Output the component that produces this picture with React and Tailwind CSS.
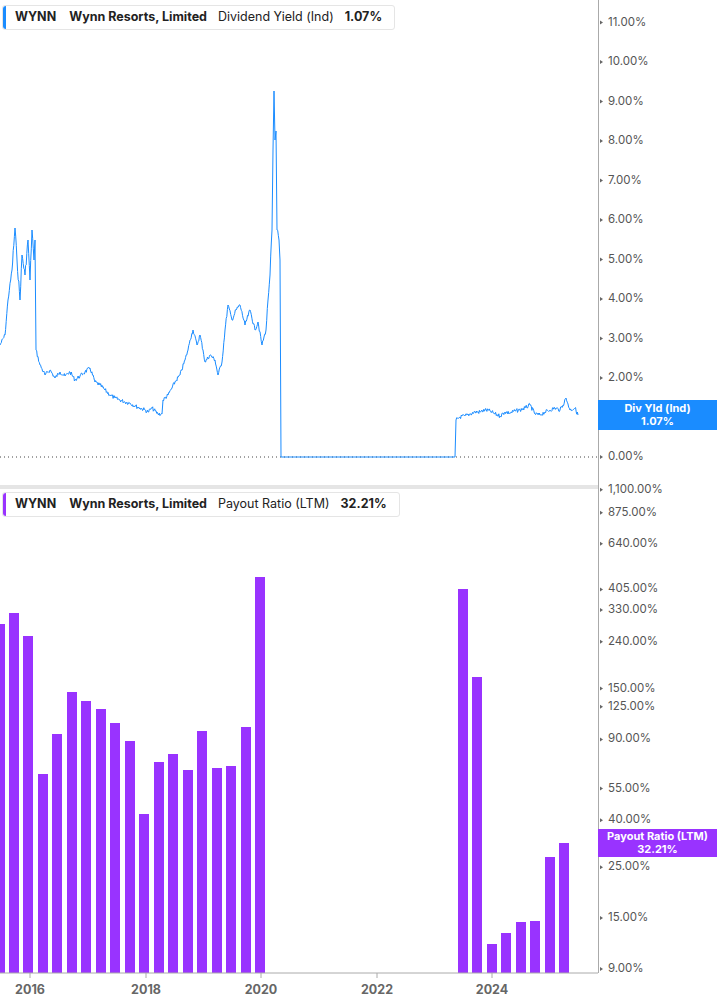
const F = { fontFamily: 'Inter, "Liberation Sans", sans-serif' };
const topTicks = [11,10,9,8,7,6,5,4,3,2,1,0];
const ty = v => 457 - v * 39.5;
const botTicks = [1100,875,640,405,330,240,150,125,90,55,40,25,15,9];
const by = v => 969 - 99.7 * Math.log(v / 9);
const bars = [[0,624],[14,613],[28,636],[43,774],[57,734],[72,692],[86,701],[101,709],[115,723],[130,741],[144,814],[159,762],[173,754],[188,770],[202,731],[217,768],[231,766],[246,727],[260,577],[463,589],[477,677],[492,944],[506,933],[521,922],[535,921],[550,857],[564,843]];
const raw = "0,345 5,335 8,300 12,270 15,228 17,260 20,300 22,255 25,275 28,240 30,280 32,230 34,260 35,240 36,350 40,365 45,375 50,370 55,378 60,372 65,376 70,372 75,380 80,376 85,372 90,368 95,382 100,385 105,390 110,395 115,398 120,400 125,402 130,403 135,406 140,408 145,410 148,412 152,408 158,414 162,414 163,400 168,395 172,388 175,382 180,375 185,360 188,350 190,340 193,330 197,345 200,335 203,350 205,362 210,355 215,360 218,375 222,362 225,330 228,305 232,320 236,310 240,305 245,325 250,310 255,330 258,322 262,345 266,330 268,300 270,275 272,230 273,150 274,91 275,140 276,131 277,230 279,240 280,260 281,457 455,457 456,420 460,417 465,416 470,414 475,412 480,412 485,410 490,411 495,414 500,416 505,412 510,413 515,411 520,410 525,408 530,405 535,414 540,415 545,412 550,410 555,408 560,410 563,405 566,398 568,404 570,410 575,408 578,415"
  .split(" ").map(p => p.split(",").map(Number));
const pts = (() => {
  const out = [];
  let s = 7;
  const rnd = () => { s = (s * 9301 + 49297) % 233280; return s / 233280 - 0.5; };
  for (let i = 0; i < raw.length - 1; i++) {
    const [x0, y0] = raw[i], [x1, y1] = raw[i + 1];
    const flat = y0 === 457 && y1 === 457;
    const n = flat || x1 - x0 < 1.5 ? 1 : Math.round((x1 - x0) * 1.5);
    for (let k = 0; k < n; k++) {
      const t = k / n;
      const j = flat || k === 0 ? 0 : rnd() * (y0 < 300 ? 8 : 4);
      out.push(`${(x0 + (x1 - x0) * t).toFixed(1)},${(y0 + (y1 - y0) * t + j).toFixed(1)}`);
    }
  }
  out.push(raw[raw.length - 1].join(","));
  return out.join(" ");
})();
const years = [[30,'2016'],[146,'2018'],[261,'2020'],[377,'2022'],[492,'2024']];

function Legend({ color, label, value }) {
  return (
    <div className="flex items-center h-[25px] w-max whitespace-nowrap bg-white border border-[#e5e5e5] rounded-[3px] pr-[12px] text-[12.5px] text-[#222]">
      <div className={`w-[3px] h-full rounded-l-[3px] ${color}`} />
      <span className="font-bold ml-[9px]">WYNN</span>
      <span className="font-bold ml-[13px]">Wynn Resorts, Limited</span>
      <span className="ml-[11px]">{label}</span>
      <span className="font-bold ml-[11px]">{value}</span>
    </div>
  );
}

export default function App() {
  return (
    <div className="relative w-[717px] h-[1005px] bg-white overflow-hidden" style={F}>
      <svg className="absolute left-0 top-0" width="717" height="1005">
        <line x1="0" y1="457" x2="598" y2="457" stroke="#444" strokeDasharray="1 3" />
        <polyline points={pts} fill="none" stroke="#1a8cff" strokeWidth="1" strokeLinejoin="round" />
        <rect x="0" y="485" width="598" height="4" fill="#e5e5e5" />
        {bars.map(([x, y], i) => <rect key={i} x={x - 5} y={y} width="10" height={973 - y} fill="#9933ff" />)}
        <line x1="0" y1="973" x2="598" y2="973" stroke="#aaa" />
        <line x1="598.5" y1="0" x2="598.5" y2="973" stroke="#aaa" />
        {years.map(([x]) => <line key={x} x1={x} y1="973" x2={x} y2="978" stroke="#aaa" />)}
        {topTicks.map(v => <path key={v} d={`M600 ${ty(v)-2} L603 ${ty(v)} L600 ${ty(v)+2}Z`} fill="#666" />)}
        {botTicks.map(v => <path key={v} d={`M600 ${by(v)-2} L603 ${by(v)} L600 ${by(v)+2}Z`} fill="#666" />)}
      </svg>
      {topTicks.map(v => (
        <div key={v} className="absolute left-[608px] text-[11.5px] text-[#555] leading-none" style={{ top: ty(v) - 6 }}>{v.toFixed(2)}%</div>
      ))}
      {botTicks.map(v => (
        <div key={v} className="absolute left-[608px] text-[11.5px] text-[#555] leading-none" style={{ top: by(v) - 6 }}>{v.toLocaleString('en-US')}.00%</div>
      ))}
      {years.map(([x, t]) => (
        <div key={t} className="absolute top-[984px] w-[40px] text-center text-[12.5px] font-bold text-[#666] leading-none" style={{ left: x - 20 }}>{t}</div>
      ))}
      <div className="absolute top-[5px] left-[2px]"><Legend color="bg-[#1a8cff]" label="Dividend Yield (Ind)" value="1.07%" /></div>
      <div className="absolute top-[492px] left-[2px]"><Legend color="bg-[#9933ff]" label="Payout Ratio (LTM)" value="32.21%" /></div>
      <div className="absolute left-[598px] top-[400px] w-[119px] h-[30px] bg-[#1a8cff] text-white text-[11px] font-bold leading-[13px] flex flex-col items-center justify-center">
        <span>Div Yld (Ind)</span><span>1.07%</span>
      </div>
      <div className="absolute left-[598px] top-[829px] w-[119px] h-[28px] bg-[#9933ff] text-white text-[11px] font-bold leading-[13px] flex flex-col items-center justify-center">
        <span>Payout Ratio (LTM)</span><span>32.21%</span>
      </div>
    </div>
  );
}
